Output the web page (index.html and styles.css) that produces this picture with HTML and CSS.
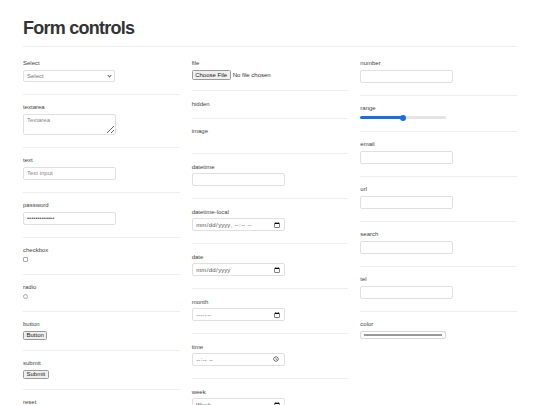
FILE: index.html
```html
<!DOCTYPE html>
<html lang="en">
<head>
    <meta charset="UTF-8">
    <meta name="viewport" content="width=device-width, initial-scale=1.0">
    <title>Form controls</title>
    <link rel="stylesheet" href="styles.css">
</head>
<body>

<div class="page">
    <h1 class="page-title">Form controls</h1>

    <div class="controls">
        <!-- Column 1 -->
        <div class="column">
            <div class="field">
                <label class="field-label">Select</label>
                <span class="select-wrap">
                    <select class="input select">
                        <option>Select</option>
                    </select>
                </span>
            </div>
            <div class="field">
                <label class="field-label">textarea</label>
                <textarea class="input textarea" placeholder="Textarea"></textarea>
            </div>
            <div class="field">
                <label class="field-label">text</label>
                <input type="text" class="input" placeholder="Text input">
            </div>
            <div class="field">
                <label class="field-label">password</label>
                <input type="password" class="input" value="password12345">
            </div>
            <div class="field">
                <label class="field-label">checkbox</label>
                <input type="checkbox" class="check">
            </div>
            <div class="field">
                <label class="field-label">radio</label>
                <input type="radio" class="check radio">
            </div>
            <div class="field">
                <label class="field-label">button</label>
                <input type="button" class="btn" value="Button">
            </div>
            <div class="field">
                <label class="field-label">submit</label>
                <input type="submit" class="btn" value="Submit">
            </div>
            <div class="field">
                <label class="field-label">reset</label>
                <input type="reset" class="btn" value="Reset">
            </div>
        </div>

        <!-- Column 2 -->
        <div class="column">
            <div class="field">
                <label class="field-label">file</label>
                <input type="file" class="file">
            </div>
            <div class="field">
                <label class="field-label">hidden</label>
                <input type="hidden">
            </div>
            <div class="field">
                <label class="field-label">image</label>
                <div class="image-slot"></div>
            </div>
            <div class="field">
                <label class="field-label">datetime</label>
                <input type="datetime" class="input">
            </div>
            <div class="field">
                <label class="field-label">datetime-local</label>
                <input type="datetime-local" class="input">
            </div>
            <div class="field">
                <label class="field-label">date</label>
                <input type="date" class="input">
            </div>
            <div class="field">
                <label class="field-label">month</label>
                <input type="month" class="input">
            </div>
            <div class="field">
                <label class="field-label">time</label>
                <input type="time" class="input">
            </div>
            <div class="field">
                <label class="field-label">week</label>
                <input type="week" class="input">
            </div>
        </div>

        <!-- Column 3 -->
        <div class="column">
            <div class="field">
                <label class="field-label">number</label>
                <input type="number" class="input">
            </div>
            <div class="field">
                <label class="field-label">range</label>
                <input type="range" class="range" value="50">
            </div>
            <div class="field">
                <label class="field-label">email</label>
                <input type="email" class="input">
            </div>
            <div class="field">
                <label class="field-label">url</label>
                <input type="url" class="input">
            </div>
            <div class="field">
                <label class="field-label">search</label>
                <input type="search" class="input">
            </div>
            <div class="field">
                <label class="field-label">tel</label>
                <input type="tel" class="input">
            </div>
            <div class="field">
                <label class="field-label">color</label>
                <input type="color" class="color">
            </div>
        </div>
    </div>
</div>

</body>
</html>
```

FILE: styles.css
```css
body {
    margin: 0;
    background-color: #fff;
    font-family: "Liberation Sans", Arial, sans-serif;
    color: #333;
}
/* page is laid out at double size and scaled down */
.page {
    zoom: 0.5;
    width: 988px;
    padding: 0 46px;
}
.page-title {
    margin: 36px 0 0;
    padding-bottom: 12px;
    font-size: 36px;
    line-height: 43px;
    letter-spacing: -1.5px;
    color: #333;
    border-bottom: 2px solid #eee;
}
.controls {
    display: flex;
    gap: 24px;
    padding-top: 8px;
}
.column {
    flex: 1;
    display: flex;
    flex-direction: column;
    min-width: 0;
}
.field {
    padding: 19px 0 20px;
    border-bottom: 2px solid #eee;
}
.field:last-child {
    border-bottom: none;
}
.field-label {
    display: block;
    font-size: 12px;
    line-height: 14px;
    color: #444;
}
.input {
    display: block;
    box-sizing: border-box;
    width: 186px;
    height: 26px;
    margin: 5px 0 4px;
    padding: 0 6px;
    border: 1px solid #e0e0e0;
    border-radius: 4px;
    background-color: #fff;
    font-family: "Liberation Sans", Arial, sans-serif;
    font-size: 12px;
    color: #555;
}
.input::placeholder {
    color: #888;
}
.select-wrap {
    position: relative;
    display: block;
    width: 184px;
}
.select-wrap::after {
    content: "";
    position: absolute;
    right: 9px;
    top: 9px;
    width: 4px;
    height: 4px;
    border-right: 1.5px solid #666;
    border-bottom: 1.5px solid #666;
    transform: rotate(45deg);
    pointer-events: none;
}
.select {
    -webkit-appearance: none;
    appearance: none;
    width: 184px;
    height: 24px;
    color: #777;
}
.textarea {
    height: 42px;
    padding: 5px 6px;
}
.check {
    -webkit-appearance: none;
    appearance: none;
    display: block;
    box-sizing: border-box;
    width: 10px;
    height: 10px;
    margin: 5px 0 4px;
    border: 1px solid #a8a8a8;
    border-radius: 2px;
    background-color: #fff;
}
.radio {
    border-radius: 50%;
}
.btn {
    display: block;
    height: 18px;
    margin: 5px 0 0;
    padding: 0 5px;
    border: 1px solid #999;
    border-radius: 3px;
    background-color: #efefef;
    font-family: "Liberation Sans", Arial, sans-serif;
    font-size: 12px;
    color: #222;
}
.file {
    display: block;
    height: 20px;
    margin: 5px 0 1px;
    font-family: "Liberation Sans", Arial, sans-serif;
    font-size: 12px;
    color: #333;
}
.file::file-selector-button {
    height: 20px;
    margin-right: 4px;
    padding: 0 5px;
    border: 1px solid #999;
    border-radius: 3px;
    background-color: #efefef;
    font-family: "Liberation Sans", Arial, sans-serif;
    font-size: 12px;
    color: #222;
}
.image-slot {
    height: 7px;
    margin: 5px 0 4px;
}
.range {
    -webkit-appearance: none;
    appearance: none;
    display: block;
    width: 172px;
    height: 6px;
    margin: 8px 0 3px;
    border-radius: 3px;
    background: linear-gradient(to right, #1a6fe0 50%, #e4e4e4 50%);
    outline: none;
}
.range::-webkit-slider-thumb {
    -webkit-appearance: none;
    width: 12px;
    height: 12px;
    border-radius: 50%;
    background-color: #1a6fe0;
    border: none;
}
.color {
    display: block;
    box-sizing: border-box;
    width: 172px;
    height: 16px;
    margin: 5px 0 4px;
    padding: 3px 6px;
    border: 1px solid #d8d8d8;
    border-radius: 4px;
    background-color: #fff;
}
.color::-webkit-color-swatch-wrapper {
    padding: 2px 0;
}
.color::-webkit-color-swatch {
    border: 1px solid #999;
    border-radius: 0;
}
```
